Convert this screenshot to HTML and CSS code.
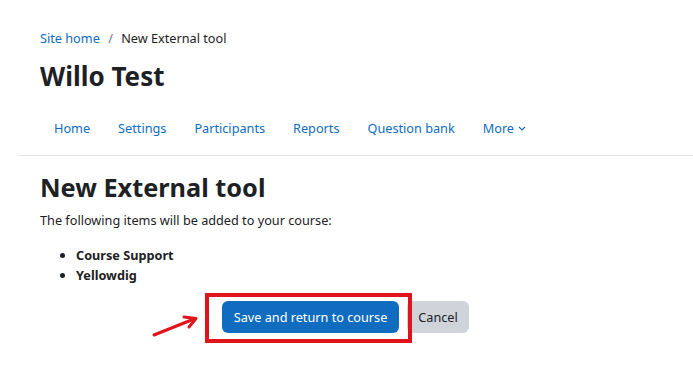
FILE: index.html
```html
<!DOCTYPE html>
<html lang="en">
<head>
    <meta charset="UTF-8">
    <title>New External tool</title>
    <link rel="stylesheet" href="styles.css">
</head>
<body>
    <div class="page-header">
        <nav class="breadcrumb">
            <a href="#">Site home</a>
            <span class="divider">/</span>
            <span>New External tool</span>
        </nav>
        <h1>Willo Test</h1>
    </div>

    <div class="secondary-nav">
        <ul>
            <li><a href="#">Home</a></li>
            <li><a href="#">Settings</a></li>
            <li><a href="#">Participants</a></li>
            <li><a href="#">Reports</a></li>
            <li><a href="#">Question bank</a></li>
            <li><a href="#">More <svg class="chev" width="8" height="5" viewBox="0 0 8 5"><path d="M1 1l3 3 3-3" fill="none" stroke="currentColor" stroke-width="1.1"/></svg></a></li>
        </ul>
    </div>

    <div class="main">
        <h2>New External tool</h2>
        <p>The following items will be added to your course:</p>
        <ul class="items">
            <li>Course Support</li>
            <li>Yellowdig</li>
        </ul>

        <div class="actions">
            <button class="btn btn-primary">Save and return to course</button>
            <button class="btn btn-secondary">Cancel</button>
            <div class="highlight"></div>
            <svg class="arrow" width="50" height="24" viewBox="0 0 50 24">
                <path d="M2 21L42 5" stroke="#e0141c" stroke-width="3" fill="none" stroke-linecap="round"/>
                <path d="M32 3L44 4.5L37 13" stroke="#e0141c" stroke-width="3" fill="none" stroke-linecap="round" stroke-linejoin="round"/>
            </svg>
        </div>
    </div>
</body>
</html>
```

FILE: styles.css
```css
body {
    margin: 0;
    min-height: 376px;
    font-family: "Noto Sans", "Open Sans", sans-serif;
    font-size: 12.7px;
    color: #1d2125;
    background: #fff;
}
a {
    color: #0f6cbf;
    text-decoration: none;
}
.page-header {
    padding: 28px 40px 0;
}
.breadcrumb {
    line-height: 20px;
}
.breadcrumb .divider {
    color: #6a737b;
    margin: 0 5px;
}
h1 {
    margin: 12px 0 0;
    font-size: 26px;
    line-height: 32px;
    font-weight: 700;
}
.secondary-nav {
    margin-left: 19px;
    padding-left: 21px;
    border-bottom: 1px solid #dee2e6;
}
.secondary-nav ul {
    list-style: none;
    margin: 0;
    padding: 26px 0 17px;
    display: flex;
}
.secondary-nav a {
    display: block;
    padding: 0 14px;
    line-height: 20px;
}
.chev {
    margin-left: 1px;
    vertical-align: 2px;
}
.main {
    padding: 0 40px 40px;
}
h2 {
    margin: 15px 0 0;
    font-size: 25.3px;
    line-height: 32px;
    font-weight: 700;
}
.main p {
    margin: 7px 0 0;
    line-height: 20px;
}
.items {
    margin: 15px 0 0;
    padding-left: 36px;
    line-height: 20px;
    font-weight: 700;
}
.actions {
    position: relative;
    display: flex;
    gap: 8px;
    margin-top: 16px;
    padding-left: 182px;
}
.btn {
    font-family: inherit;
    font-size: 12.7px;
    height: 32px;
    border: none;
    border-radius: 6px;
    padding: 0;
    white-space: nowrap;
}
.btn-primary {
    background: #0f6cbf;
    color: #fff;
    width: 177px;
}
.btn-secondary {
    background: #ced4da;
    color: #1d2125;
    width: 62px;
}
.highlight {
    position: absolute;
    left: 165px;
    top: -8px;
    width: 199px;
    height: 42px;
    border: 4px solid #e0141c;
}
.arrow {
    position: absolute;
    left: 112px;
    top: 13px;
}
```
